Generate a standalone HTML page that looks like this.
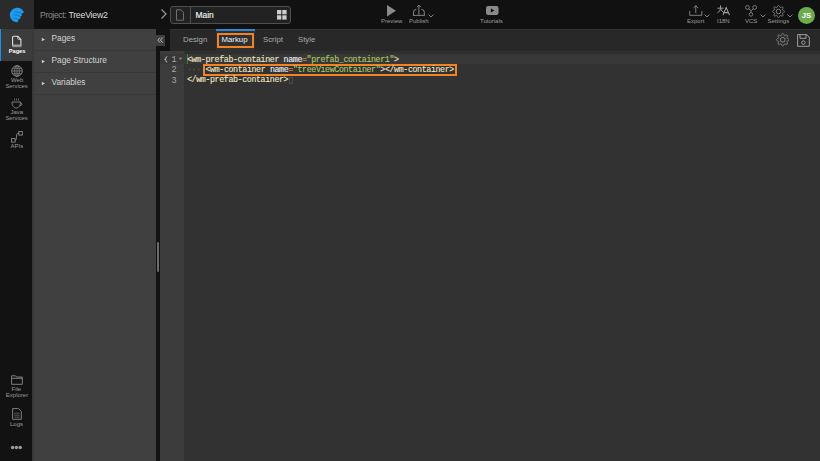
<!DOCTYPE html>
<html><head><meta charset="utf-8">
<style>
*{box-sizing:border-box;margin:0;padding:0}
html,body{width:820px;height:461px;overflow:hidden;background:#2e2e2e;font-family:"Liberation Sans",sans-serif}
.abs{position:absolute}
#header{left:0;top:0;width:820px;height:29px;background:#111111}
#logo{left:0;top:0;width:34px;height:29px;background:#2b2b2b}
#leftbar{left:0;top:29px;width:32px;height:432px;background:#121212}
#leftborder{left:32px;top:29px;width:2px;height:432px;background:#383838}
#activetab{left:0;top:29px;width:32px;height:32px;background:#3c3c3c}
#bluebar{left:0;top:29px;width:1.2px;height:32px;background:#1e8ff0}
#sidebar{left:34px;top:29px;width:122px;height:432px;background:#404040}
.row{position:absolute;left:34px;width:122px;height:22px;border-bottom:1px solid #383838}
.row .tri{position:absolute;left:6.5px;top:8px}
.row .lbl{position:absolute;left:17.5px;top:4.2px;font-size:8.3px;color:#d4d4d4;white-space:nowrap}
#split{left:156px;top:28px;width:14px;height:23px;background:#121212}
#split2{left:156px;top:51px;width:4px;height:410px;background:#121212}
#collapse{left:156px;top:35px;width:9px;height:11px;background:#3d3d3d}
#handle{left:157px;top:242px;width:2px;height:30px;background:#6c6c6c;border-radius:1px}
#tabbar{left:170px;top:29px;width:650px;height:22px;background:#282828}
#hdrline{left:170px;top:29px;width:650px;height:1px;background:#303030}
#gutter{left:160px;top:51px;width:24px;height:410px;background:#3c3c3c}
#code{left:184px;top:51px;width:636px;height:410px;background:#323232}
.tab{position:absolute;top:35px;font-size:7.8px;color:#aaa;white-space:nowrap}
.ui{font-size:6px;color:#9c9c9c;white-space:nowrap;position:absolute}
.mono{font-family:"Liberation Mono",monospace;font-size:8.3px;letter-spacing:-0.38px;-webkit-text-stroke:0.12px currentColor;white-space:pre;position:absolute;line-height:10px}
.tg{color:#f0e4c0}.at{color:#eeeef6}.eq{color:#e07d30}.st{color:#a8c860}
.ln{font-family:"Liberation Mono",monospace;font-size:8.5px;color:#a8a8a8;position:absolute}
</style></head><body>
<div id="header" class="abs"></div>
<div id="logo" class="abs"></div>
<svg class="abs" style="left:0;top:0" width="34" height="28" viewBox="0 0 34 28">
  <path d="M16.7 7.7 A7.3 7.3 0 0 1 24 12.6 L21.4 13.7 L22 15.6 L20.3 16.6 L20.6 18.3 L18.3 19.6 L17.6 22.3 A7.3 7.3 0 1 1 16.7 7.7 Z" fill="#1e9bf0"/>
  <path d="M21.4 13.7 Q18 11.2 14.8 12 M20.3 16.6 Q17 14.2 13.8 15 M18.3 19.6 Q16 17.2 13.8 18" stroke="#1463a8" stroke-width="0.65" fill="none"/>
</svg>
<div class="abs" style="left:40px;top:9.5px;font-size:8.6px;color:#8c8c8c;white-space:nowrap;letter-spacing:-0.35px">Project: <span style="color:#dcdcdc;font-size:8.8px;letter-spacing:-0.25px">TreeView2</span></div>
<!-- breadcrumb -->
<svg class="abs" style="left:160px;top:8px" width="8" height="12" viewBox="0 0 8 12"><path d="M1.5 1.5 L6 6 L1.5 10.5" stroke="#999" stroke-width="1.2" fill="none"/></svg>
<div class="abs" style="left:170px;top:6px;width:121px;height:18px;border:1px solid #505050;border-radius:3px;background:#222222"></div>
<div class="abs" style="left:190px;top:7px;width:1px;height:16px;background:#505050"></div>
<svg class="abs" style="left:175px;top:9px" width="10" height="12" viewBox="0 0 10 12"><path d="M1.5 0.8 H6 L8.5 3.3 V11.2 H1.5 Z" stroke="#777" stroke-width="0.9" fill="none"/></svg>
<div class="abs" style="left:195.5px;top:10px;font-size:8.4px;color:#f4f4f4;-webkit-text-stroke:0.15px #f4f4f4">Main</div>
<svg class="abs" style="left:277px;top:10px" width="10" height="10" viewBox="0 0 10 10"><rect x="0" y="0" width="4.3" height="4.3" fill="#ccc"/><rect x="5.3" y="0" width="4.3" height="4.3" fill="#ccc"/><rect x="0" y="5.3" width="4.3" height="4.3" fill="#ccc"/><rect x="5.3" y="5.3" width="4.3" height="4.3" fill="#ccc"/></svg>

<!-- header center icons -->
<svg class="abs" style="left:387px;top:4.5px" width="10" height="12" viewBox="0 0 10 12"><path d="M0 0 L9 5.8 L0 11.6 Z" fill="#8a8a8a"/></svg>
<div class="ui" style="left:381px;top:17.5px">Preview</div>
<svg class="abs" style="left:408px;top:2px" width="28" height="18" viewBox="408 2 28 18"><path d="M413.5 15.4 V12.2 Q413.5 9.3 416.4 9.3 M424.3 15.4 V12.2 Q424.3 9.3 421.4 9.3 M413 15.4 H424.8 M418.9 14.9 V5.3 M417 7.1 L418.9 5.1 L420.8 7.1" stroke="#8e8e8e" stroke-width="0.9" fill="none"/></svg>
<div class="ui" style="left:409px;top:17.5px">Publish</div>
<svg class="abs" style="left:427.5px;top:13.5px" width="6" height="4" viewBox="0 0 6 4"><path d="M0.5 0.5 L3 3 L5.5 0.5" stroke="#8a8a8a" stroke-width="0.9" fill="none"/></svg>
<svg class="abs" style="left:485.5px;top:6px" width="13" height="9" viewBox="0 0 13 9"><rect x="0" y="0" width="12.5" height="9" rx="2.2" fill="#8a8a8a"/><path d="M4.8 2.5 L8.5 4.5 L4.8 6.5Z" fill="#111"/></svg>
<div class="ui" style="left:480px;top:17.5px">Tutorials</div>

<!-- right icons -->
<svg class="abs" style="left:689px;top:5px" width="14" height="11" viewBox="0 0 14 11"><path d="M0.7 6 V10.3 H12.8 V6 M6.75 8 V0.7 M4.4 3 L6.75 0.7 L9.1 3" stroke="#8a8a8a" stroke-width="0.9" fill="none"/></svg>
<svg class="abs" style="left:704px;top:13.5px" width="6" height="4" viewBox="0 0 6 4"><path d="M0.5 0.5 L3 3 L5.5 0.5" stroke="#8a8a8a" stroke-width="0.9" fill="none"/></svg>
<div class="ui" style="left:687px;top:17.5px">Export</div>
<svg class="abs" style="left:712px;top:2px" width="22" height="16" viewBox="0 0 22 16"><path d="M8.5 3.4 V6.5 M5.4 6.2 H11.6 M8.5 6.2 C8.3 8.4 7.3 9.8 5.4 10.8 M8.7 7 C9.3 8.6 10.3 9.8 11.8 10.6" stroke="#a0a0a0" stroke-width="0.95" fill="none"/><path d="M10.9 13.1 L14.2 5.5 L17.5 13.1 M12 10.6 H16.4" stroke="#a0a0a0" stroke-width="1.05" fill="none"/></svg>
<div class="ui" style="left:717px;top:17.5px">I18N</div>
<svg class="abs" style="left:744px;top:3.5px" width="14" height="14" viewBox="0 0 14 14"><circle cx="3.4" cy="3.4" r="1.9" stroke="#8e8e8e" stroke-width="0.8" fill="none"/><circle cx="10.7" cy="3.4" r="1.9" stroke="#8e8e8e" stroke-width="0.8" fill="none"/><circle cx="7" cy="10.4" r="1.8" stroke="#8e8e8e" stroke-width="0.8" fill="none"/><path d="M4.6 4.9 L7 6.6 L9.5 4.9 M7 6.6 V8.6" stroke="#8e8e8e" stroke-width="0.8" fill="none"/></svg>
<svg class="abs" style="left:759.5px;top:13.5px" width="6" height="4" viewBox="0 0 6 4"><path d="M0.5 0.5 L3 3 L5.5 0.5" stroke="#8a8a8a" stroke-width="0.9" fill="none"/></svg>
<div class="ui" style="left:745px;top:17.5px">VCS</div>
<svg class="abs gear" style="left:772px;top:4.5px" width="13" height="13" viewBox="0 0 24 24"><path id="gearp" d="M12.00 0.70 L12.44 0.79 L12.86 1.06 L13.25 1.47 L13.58 2.00 L13.87 2.58 L14.12 3.18 L14.33 3.72 L14.54 4.18 L14.76 4.51 L15.02 4.70 L15.34 4.75 L15.73 4.67 L16.20 4.50 L16.74 4.26 L17.33 4.02 L17.95 3.81 L18.56 3.68 L19.13 3.65 L19.61 3.76 L19.99 4.01 L20.24 4.39 L20.35 4.87 L20.32 5.44 L20.19 6.05 L19.98 6.67 L19.74 7.26 L19.50 7.80 L19.33 8.27 L19.25 8.66 L19.30 8.98 L19.49 9.24 L19.82 9.46 L20.28 9.67 L20.82 9.88 L21.42 10.13 L22.00 10.42 L22.53 10.75 L22.94 11.14 L23.21 11.56 L23.30 12.00 L23.21 12.44 L22.94 12.86 L22.53 13.25 L22.00 13.58 L21.42 13.87 L20.82 14.12 L20.28 14.33 L19.82 14.54 L19.49 14.76 L19.30 15.02 L19.25 15.34 L19.33 15.73 L19.50 16.20 L19.74 16.74 L19.98 17.33 L20.19 17.95 L20.32 18.56 L20.35 19.13 L20.24 19.61 L19.99 19.99 L19.61 20.24 L19.13 20.35 L18.56 20.32 L17.95 20.19 L17.33 19.98 L16.74 19.74 L16.20 19.50 L15.73 19.33 L15.34 19.25 L15.02 19.30 L14.76 19.49 L14.54 19.82 L14.33 20.28 L14.12 20.82 L13.87 21.42 L13.58 22.00 L13.25 22.53 L12.86 22.94 L12.44 23.21 L12.00 23.30 L11.56 23.21 L11.14 22.94 L10.75 22.53 L10.42 22.00 L10.13 21.42 L9.88 20.82 L9.67 20.28 L9.46 19.82 L9.24 19.49 L8.98 19.30 L8.66 19.25 L8.27 19.33 L7.80 19.50 L7.26 19.74 L6.67 19.98 L6.05 20.19 L5.44 20.32 L4.87 20.35 L4.39 20.24 L4.01 19.99 L3.76 19.61 L3.65 19.13 L3.68 18.56 L3.81 17.95 L4.02 17.33 L4.26 16.74 L4.50 16.20 L4.67 15.73 L4.75 15.34 L4.70 15.02 L4.51 14.76 L4.18 14.54 L3.72 14.33 L3.18 14.12 L2.58 13.87 L2.00 13.58 L1.47 13.25 L1.06 12.86 L0.79 12.44 L0.70 12.00 L0.79 11.56 L1.06 11.14 L1.47 10.75 L2.00 10.42 L2.58 10.13 L3.18 9.88 L3.72 9.67 L4.18 9.46 L4.51 9.24 L4.70 8.98 L4.75 8.66 L4.67 8.27 L4.50 7.80 L4.26 7.26 L4.02 6.67 L3.81 6.05 L3.68 5.44 L3.65 4.87 L3.76 4.39 L4.01 4.01 L4.39 3.76 L4.87 3.65 L5.44 3.68 L6.05 3.81 L6.67 4.02 L7.26 4.26 L7.80 4.50 L8.27 4.67 L8.66 4.75 L8.98 4.70 L9.24 4.51 L9.46 4.18 L9.67 3.72 L9.88 3.18 L10.13 2.58 L10.42 2.00 L10.75 1.47 L11.14 1.06 L11.56 0.79Z" stroke="#8e8e8e" stroke-width="1.6" fill="none" stroke-linejoin="round"/><circle cx="12" cy="12" r="4.2" stroke="#8e8e8e" stroke-width="1.6" fill="none"/></svg>
<svg class="abs" style="left:787px;top:13.5px" width="6" height="4" viewBox="0 0 6 4"><path d="M0.5 0.5 L3 3 L5.5 0.5" stroke="#8a8a8a" stroke-width="0.9" fill="none"/></svg>
<div class="ui" style="left:767.5px;top:17.5px">Settings</div>
<div class="abs" style="left:798px;top:6.5px;width:17px;height:17px;border-radius:50%;background:#6aad4e;color:#fff;font-size:7.6px;font-weight:bold;line-height:17px;text-align:center">JS</div>

<!-- left bar -->
<div id="leftbar" class="abs"></div>
<div id="leftborder" class="abs"></div>
<div id="activetab" class="abs"></div>
<div id="bluebar" class="abs"></div>
<svg class="abs" style="left:11px;top:35px" width="12" height="13" viewBox="0 0 12 13"><path d="M1.6 2.3 Q1.6 1.3 2.6 1.3 H6.8 L9.9 4.4 V10.4 H1.6 Z" fill="none" stroke="#dedede" stroke-width="1.1"/><path d="M6.8 1.3 V3.5 Q6.8 4.4 7.7 4.4 H9.9" fill="none" stroke="#dedede" stroke-width="0.8"/><rect x="1.1" y="10.3" width="9.3" height="1.9" fill="#8c8c8c"/></svg>
<div class="abs" style="left:8.7px;top:48.3px;font-size:5.7px;color:#fff;font-weight:bold;letter-spacing:0px">Pages</div>
<svg class="abs" style="left:10.5px;top:64.5px" width="12" height="12" viewBox="0 0 12 12"><circle cx="6" cy="6" r="5.3" stroke="#8a8a8a" stroke-width="0.9" fill="none"/><ellipse cx="6" cy="6" rx="2.3" ry="5.3" stroke="#8a8a8a" stroke-width="0.8" fill="none"/><path d="M6 0.7 V11.3 M0.7 6 H11.3 M1.5 3.3 H10.5 M1.5 8.7 H10.5" stroke="#8a8a8a" stroke-width="0.7"/></svg>
<div class="ui" style="left:11px;top:76.5px;font-size:6px">Web</div>
<div class="ui" style="left:5.5px;top:82.5px;font-size:5.8px">Services</div>
<svg class="abs" style="left:11px;top:97.5px" width="12" height="11" viewBox="0 0 12 11"><path d="M3.5 0.5 V2.5 M5.5 0.5 V2.5 M7.5 0.5 V2.5" stroke="#8a8a8a" stroke-width="0.7"/><path d="M1 4 H9.5 C9.5 8 7.5 10 5.2 10 C3 10 1 8 1 4Z M9.5 5 C11.5 5 11.5 7.5 9 7.5" stroke="#8a8a8a" stroke-width="0.9" fill="none"/></svg>
<div class="ui" style="left:10.5px;top:108.5px">Java</div>
<div class="ui" style="left:5.5px;top:114.5px;font-size:5.8px">Services</div>
<svg class="abs" style="left:11px;top:131px" width="12" height="12" viewBox="0 0 12 12"><rect x="0.6" y="7.6" width="3.5" height="3.5" stroke="#8a8a8a" stroke-width="0.9" fill="none"/><rect x="7.8" y="0.6" width="3.5" height="3.5" stroke="#8a8a8a" stroke-width="0.9" fill="none"/><path d="M4.1 9.3 C5.5 9.3 5.5 7 5.5 5 C5.5 3 6 2.3 7.8 2.3" stroke="#8a8a8a" stroke-width="0.9" fill="none"/></svg>
<div class="ui" style="left:10.5px;top:142.5px">APIs</div>
<svg class="abs" style="left:10.5px;top:375px" width="12" height="10" viewBox="0 0 12 10"><path d="M0.6 0.8 H4.5 L5.5 2 H11.3 V9.3 H0.6 Z M0.6 3.3 H11.3" stroke="#8a8a8a" stroke-width="0.9" fill="none"/></svg>
<div class="ui" style="left:11.5px;top:385.8px">File</div>
<div class="ui" style="left:5.8px;top:391.5px">Explorer</div>
<svg class="abs" style="left:11.5px;top:407.5px" width="10" height="12" viewBox="0 0 10 12"><path d="M0.6 0.6 H6.5 L9.3 3.4 V11.3 H0.6 Z" stroke="#8a8a8a" stroke-width="0.9" fill="none"/><path d="M2.3 5.2 H7.6 M2.3 7.2 H7.6 M2.3 9.2 H7.6" stroke="#8a8a8a" stroke-width="0.6" fill="none"/></svg>
<div class="ui" style="left:10px;top:420.5px">Logs</div>
<svg class="abs" style="left:0;top:440px" width="32" height="12" viewBox="0 0 32 12"><circle cx="12.6" cy="7.6" r="1.75" fill="#9a9a9a"/><circle cx="16.4" cy="7.6" r="1.75" fill="#9a9a9a"/><circle cx="20.2" cy="7.6" r="1.75" fill="#9a9a9a"/></svg>

<!-- sidebar -->
<div id="sidebar" class="abs"></div>

<div class="row" style="top:29px"><svg class="tri" width="5" height="5" viewBox="0 0 5 5"><path d="M0.8 0.7 L4 2.5 L0.8 4.3 Z" fill="#c8c8c8"/></svg><div class="lbl">Pages</div></div>
<div class="row" style="top:51px"><svg class="tri" width="5" height="5" viewBox="0 0 5 5"><path d="M0.8 0.7 L4 2.5 L0.8 4.3 Z" fill="#c8c8c8"/></svg><div class="lbl">Page Structure</div></div>
<div class="row" style="top:73px"><svg class="tri" width="5" height="5" viewBox="0 0 5 5"><path d="M0.8 0.7 L4 2.5 L0.8 4.3 Z" fill="#c8c8c8"/></svg><div class="lbl">Variables</div></div>

<div id="split" class="abs"></div>
<div id="split2" class="abs"></div>
<div id="collapse" class="abs"></div>
<svg class="abs" style="left:157px;top:37px" width="7" height="7" viewBox="0 0 7 7"><path d="M3.2 0.5 L0.8 3.1 L3.2 5.7 M5.8 0.5 L3.4 3.1 L5.8 5.7" stroke="#c8c8c8" stroke-width="0.9" fill="none"/></svg>
<div id="handle" class="abs"></div>

<!-- editor -->
<div id="tabbar" class="abs"></div>
<div id="hdrline" class="abs"></div>
<div class="abs" style="left:216px;top:29px;width:39px;height:22px;background:#303030"></div>
<div class="abs" style="left:216px;top:29px;width:39px;height:1.5px;background:#2a8ad8"></div>
<div class="abs" style="left:217px;top:33px;width:37px;height:15px;border:2px solid #f08424"></div>
<div class="tab" style="left:183px">Design</div>
<div class="tab" style="left:221.5px;color:#f2f2f2">Markup</div>
<div class="tab" style="left:263px">Script</div>
<div class="tab" style="left:298px">Style</div>
<svg class="abs" style="left:775.5px;top:33px" width="13.5" height="13.5" viewBox="0 0 24 24"><use href="#gearp"/><circle cx="12" cy="12" r="4.2" stroke="#8e8e8e" stroke-width="1.6" fill="none"/></svg>
<svg class="abs" style="left:797px;top:33.5px" width="13" height="13" viewBox="0 0 13 13"><path d="M0.6 0.6 H9.7 L12.3 3.2 V12.3 H0.6 Z M3 0.6 V4.3 H9 V0.6" stroke="#aaa" stroke-width="0.9" fill="none"/><circle cx="6.4" cy="8.6" r="1.75" stroke="#aaa" stroke-width="0.85" fill="none"/></svg>

<div id="gutter" class="abs"></div>
<div id="code" class="abs"></div>
<div class="abs" style="left:184px;top:51px;width:636px;height:3px;background:#2f2f2f"></div>
<div class="abs" style="left:184px;top:54px;width:636px;height:10px;background:#383839"></div>
<div class="abs" style="left:160px;top:54px;width:24px;height:10px;background:#383838"></div>
<svg class="abs" style="left:160px;top:54px" width="10" height="10" viewBox="160 54 10 10"><path d="M167.2 56.6 Q165.9 56.6 165.9 57.9 V58.7 Q165.9 59.4 164.7 59.4 Q165.9 59.4 165.9 60.1 V60.9 Q165.9 62.1 167.2 62.1" stroke="#cfcfcf" stroke-width="0.85" fill="none"/></svg>
<div class="ln" style="left:171.5px;top:55px">1</div>
<svg class="abs" style="left:178px;top:57px" width="5" height="4" viewBox="0 0 5 4"><path d="M0.7 0.7 H4.3 L2.5 3 Z" fill="#8a8a8a"/></svg>
<div class="ln" style="left:171.5px;top:65px">2</div>
<div class="ln" style="left:171.5px;top:75.5px">3</div>
<div class="abs" style="left:187px;top:54px;width:1px;height:10px;background:#3f7c36"></div>
<div class="mono" style="left:187px;top:54.5px"><span class="tg">&lt;wm-prefab-container</span> <span class="at">name</span><span class="eq">=</span><span class="st">"prefab_container1"</span><span class="tg">&gt;</span></div>
<div class="mono" style="left:187px;top:64.5px;color:#5a5a5a">····</div>
<div class="abs" style="left:203px;top:64px;width:254px;height:12px;border:2px solid #f08424"></div>
<div class="mono" style="left:205.5px;top:64.5px"><span class="tg">&lt;wm-container</span> <span class="at">name</span><span class="eq">=</span><span class="st">"treeViewContainer"</span><span class="tg">&gt;&lt;/wm-container&gt;</span></div>
<div class="mono" style="left:187px;top:75.2px"><span class="tg">&lt;/wm-prefab-container&gt;</span></div>
<div class="abs" style="left:288.5px;top:77px;width:4.5px;height:6.5px;border:0.6px solid #4a4a4a"></div>
</body></html>
